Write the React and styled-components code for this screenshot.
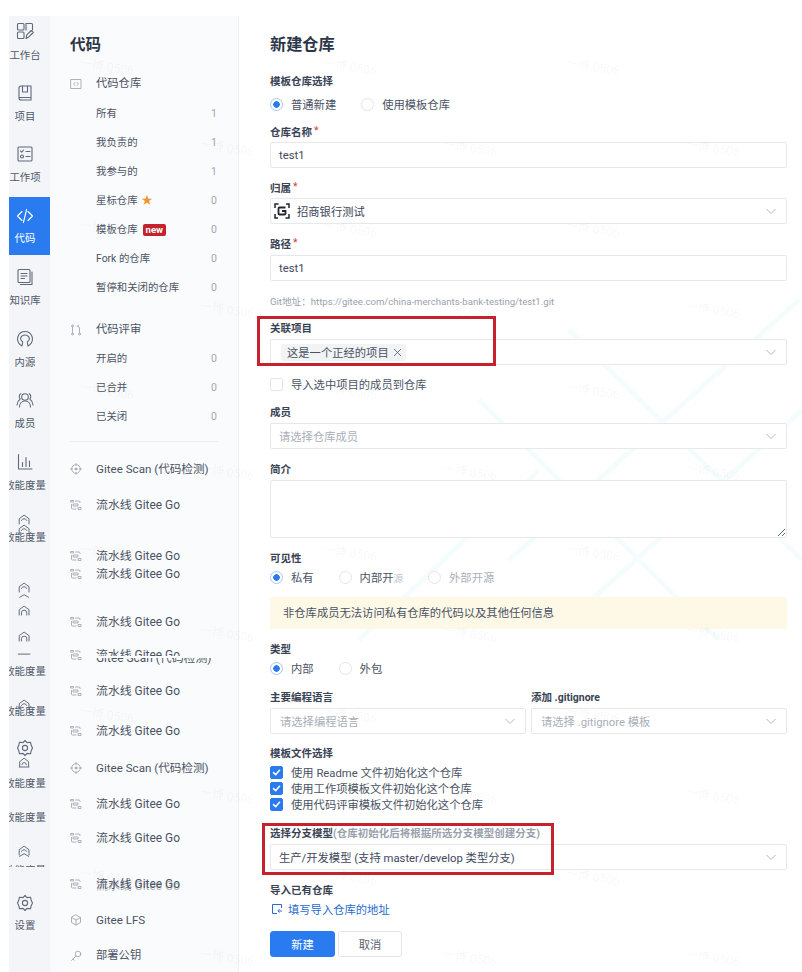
import React from 'react';
import styled, { createGlobalStyle } from 'styled-components';

const GlobalStyle = createGlobalStyle`
  html, body {
    margin: 0;
    background: #fff;
    font-family: Roboto, 'Noto Sans CJK SC', sans-serif;
  }
  * { box-sizing: border-box; }
`;

const Page = styled.div`
  position: relative;
  display: flex;
  width: 802px;
  height: 972px;
  overflow: hidden;
  background: #fff;
`;

// Icon rail
const Rail = styled.nav`
  flex: none;
  width: 41px;
  height: 956px;
  margin: 16px 0 0 9px;
  padding-right: 9px;
  background: #f4f5f8;
  display: flex;
  flex-direction: column;
  align-items: center;
  overflow: hidden;
  color: #5f697b;
`;

const RailIcon = styled.span`
  flex: none;
  display: block;
  height: ${p => p.$h}px;
  margin-top: ${p => p.$mt}px;
  position: relative;
  svg { display: block; }
`;

const RailLabel = styled.span`
  flex: none;
  position: relative;
  display: block;
  height: ${p => p.$h}px;
  margin-top: ${p => p.$mt}px;
  font-size: 10.4px;
  line-height: 16px;
  white-space: nowrap;
  overflow: hidden;
  color: #4f5869;
`;

const RailActive = styled.div`
  flex: none;
  align-self: stretch;
  width: 41px;
  height: 58px;
  margin-top: ${p => p.$mt}px;
  padding: 10px 9px 0 0;
  background: #2a7bef;
  color: #fff;
  display: flex;
  flex-direction: column;
  align-items: center;
  font-size: 10.4px;
  line-height: 14px;
  gap: 7px;
  svg { display: block; }
`;

const Svg = ({ size = 18, children }) => (
  <svg width={size} height={size} viewBox="0 0 18 18" fill="none" stroke="currentColor" strokeWidth="1.1" strokeLinecap="round" strokeLinejoin="round">
    {children}
  </svg>
);

const DashIcon = () => (
  <Svg>
    <rect x="1.5" y="1.5" width="6.5" height="6.5" rx="1" />
    <rect x="1.5" y="10" width="6.5" height="6.5" rx="1" />
    <path d="M10 1.5h5.5a1 1 0 0 1 1 1V8" />
    <path d="M10 8V2M10 16.5l.8-3.6 4.4-4.4 2 2-4.4 4.4z" />
  </Svg>
);
const BookIcon = () => (
  <Svg>
    <path d="M3 4a2 2 0 0 1 2-2h10v14H5a2 2 0 0 1-2-2zM3 13.5h12" />
    <path d="M6.5 2v6h5V2" />
  </Svg>
);
const TaskIcon = () => (
  <Svg>
    <rect x="2" y="2" width="14" height="14" rx="1" />
    <path d="M4.500 6l1.200 1.200 2-2.200M10 6.500h4M10 11.500h4" />
    <circle cx="6" cy="11.500" r="1.500" />
  </Svg>
);
const CodeIcon = () => (
  <Svg>
    <path d="M6 4.500 1.500 9 6 13.500M12 4.500 16.500 9 12 13.500M10.600 2.500 7.400 15.500" />
  </Svg>
);
const DocIcon = () => (
  <Svg>
    <rect x="2" y="1.500" width="12" height="13" rx="1" />
    <path d="M5 5.500h6M5 8h6M5 10.500h3.500M16 4v12.500H4.500" />
  </Svg>
);
const SourceIcon = () => (
  <Svg>
    <path d="M6 16C2.500 14 .8 10.500 2 6.500 3.300 3 6 1.500 9 1.500S14.700 3 16 6.500c1.200 4-.5 7.500-4 9.500l-.7-4c2-1.500 2.500-3 1.800-4.500C12.300 5.800 10.800 5 9 5s-3.300.8-4.100 2.500C4.200 9 4.700 10.500 6.700 12z" />
  </Svg>
);
const UsersIcon = () => (
  <Svg>
    <circle cx="9" cy="6" r="3.300" />
    <path d="M3.500 16c0-3.600 2.300-6 5.500-6s5.500 2.400 5.500 6M4.800 2.800C3 3.600 2.600 6.500 4.200 8M1 14c.2-2.400 1-4.200 2.600-5.200M13.200 2.800C15 3.600 15.400 6.500 13.800 8M17 14c-.2-2.400-1-4.200-2.600-5.200" />
  </Svg>
);
const BarsIcon = () => (
  <Svg>
    <path d="M2.500 1.500v14.500H16M6.500 9.500v4M10 4.500v9M13.500 8v5.500" />
  </Svg>
);
const ArchIcon = ({ open }) => (
  <Svg size={16}>
    <path d="M2.500 13.500V7.500L8 3.500l5.500 4v6" />
    <path d={open ? 'M5 9.500a3.300 3.300 0 0 1 6 0' : 'M5 13.500v-2.500a3 3 0 0 1 6 0v2.500'} />
  </Svg>
);
const RoofIcon = () => (
  <Svg size={16}>
    <path d="M3 6 8 3l5 3" />
  </Svg>
);
const RuleIcon = () => (
  <Svg size={16}>
    <path d="M1.500 8h13" />
  </Svg>
);
const GroundArchIcon = () => (
  <Svg size={16}>
    <path d="M2.500 13.500h11M3 13V7.500L8 3.500l5 4V13M5.500 11a2.500 2.500 0 0 1 5 0" />
  </Svg>
);
const GearIcon = () => (
  <Svg>
    <path d="M9 1.500 11 3.600l3.500-.4.7 3.100L16.500 9l-1.300 2.700-.7 3.100-3.500-.4L9 16.500l-2-2.100-3.500.4-.7-3.100L1.500 9l1.300-2.700.7-3.100 3.500.4z" />
    <circle cx="9" cy="9" r="2.600" />
  </Svg>
);

const railItems = [
  { icon: <DashIcon />, c: 31 },
  { label: '工作台', c: 55 },
  { icon: <BookIcon />, c: 93 },
  { label: '项目', c: 116 },
  { icon: <TaskIcon />, c: 154 },
  { label: '工作项', c: 177 },
  { active: true, c: 226 },
  { icon: <DocIcon />, c: 277 },
  { label: '知识库', c: 300 },
  { icon: <SourceIcon />, c: 339 },
  { label: '内源', c: 362 },
  { icon: <UsersIcon />, c: 400 },
  { label: '成员', c: 423 },
  { icon: <BarsIcon />, c: 462 },
  { label: '效能度量', c: 485 },
  { icon: <ArchIcon open />, c: 520, h: 16 },
  { icon: <ArchIcon open />, c: 530, h: 16 },
  { label: '效能度量', c: 537 },
  { icon: <ArchIcon open />, c: 588, h: 16 },
  { icon: <RoofIcon />, c: 600, h: 16 },
  { icon: <ArchIcon />, c: 611, h: 16 },
  { icon: <ArchIcon />, c: 637, h: 16 },
  { icon: <RuleIcon />, c: 655, h: 16 },
  { label: '效能度量', c: 671 },
  { icon: <ArchIcon open />, c: 705, h: 16 },
  { label: '效能度量', c: 711 },
  { icon: <GearIcon />, c: 748, h: 18 },
  { icon: <GroundArchIcon />, c: 763, h: 16 },
  { label: '效能度量', c: 783 },
  { label: '效能度量', c: 817 },
  { icon: <ArchIcon open />, c: 851, h: 16 },
  { icon: <RoofIcon />, c: 859, h: 16 },
  { label: '效能度量', c: 865, h: 4 },
  { icon: <GearIcon />, c: 903 },
  { label: '设置', c: 925 },
];

function RailBar() {
  let y = 16;
  return (
    <Rail>
      {railItems.map((it, i) => {
        const h = it.active ? 58 : it.h || (it.label ? 14 : 18);
        const mt = it.c - h / 2 - y;
        y = it.c + h / 2;
        if (it.active) {
          return (
            <RailActive key={i} $mt={mt}>
              <CodeIcon />
              代码
            </RailActive>
          );
        }
        if (it.label) return <RailLabel key={i} $mt={mt} $h={h}>{it.label}</RailLabel>;
        return <RailIcon key={i} $mt={mt} $h={h}>{it.icon}</RailIcon>;
      })}
    </Rail>
  );
}

// Secondary menu
const Side = styled.aside`
  position: relative;
  flex: none;
  width: 189px;
  height: 956px;
  margin-top: 16px;
  padding: 0 20px;
  background: #fafbfc;
  border-right: 1px solid #eef0f4;
  overflow: hidden;
`;

const SideTitle = styled.h2`
  margin: 19px 0 0;
  height: 20px;
  font-size: 15.5px;
  line-height: 20px;
  font-weight: 700;
  color: #2c3648;
`;

const Row = styled.div`
  position: relative;
  display: flex;
  align-items: center;
  height: 20px;
  margin-top: ${p => p.$mt}px;
  padding-left: 26px;
  font-size: ${p => p.$size}px;
  line-height: 20px;
  color: #4a5364;
  white-space: nowrap;
`;

const RowIcon = styled.span`
  position: absolute;
  left: 0;
  top: 4px;
  width: 12px;
  height: 12px;
  color: #a3a9b4;
  svg { display: block; }
`;

const Count = styled.span`
  margin-left: auto;
  padding-right: 1px;
  font-size: 10.5px;
  color: #a3a9b4;
`;

const Star = styled.span`
  margin-left: 4px;
  font-size: 11px;
  color: #f0932b;
`;

const NewBadge = styled.span`
  margin-left: 5px;
  height: 12px;
  padding: 0 3px;
  border-radius: 2px;
  background: #c4222d;
  color: #fff;
  font-size: 9.5px;
  line-height: 11px;
  font-weight: 700;
`;

const Divider = styled.div`
  height: 1px;
  margin-top: ${p => p.$mt}px;
  background: #eceef1;
`;

const Smear = styled.span`
  display: inline-block;
  clip-path: inset(0 0 9px 0);
`;

const SmearOver = styled.span`
  position: absolute;
  left: 26px;
  top: 3px;
  color: #4a5364;
  clip-path: inset(10px 0 0 0);
`;

const Doubled = styled.span`
  text-shadow: 0 2px 0 rgba(74, 83, 100, 0.45);
`;

const Tiny = ({ children }) => (
  <svg width="12" height="12" viewBox="0 0 12 12" fill="none" stroke="currentColor" strokeWidth="0.9" strokeLinecap="round" strokeLinejoin="round">
    {children}
  </svg>
);
const CodeBox = () => (
  <Tiny>
    <rect x="1" y="1.500" width="10" height="9" />
    <path d="M5 4.500 3.500 6 5 7.500M7 4.500 8.500 6 7 7.500" />
  </Tiny>
);
const PrIcon = () => (
  <Tiny>
    <circle cx="2.500" cy="2" r="1" />
    <circle cx="2.500" cy="10" r="1" />
    <circle cx="9.500" cy="10" r="1" />
    <path d="M2.500 3v6M9.500 9V3.500L7.500 2M7.500 2l1-1M7.500 2l1 1" />
  </Tiny>
);
const ScanIcon = () => (
  <Tiny>
    <circle cx="6" cy="6" r="4.300" />
    <circle cx="6" cy="6" r="1" fill="currentColor" />
    <path d="M6 .5v2M6 9.500v2M.5 6h2M9.500 6h2" />
  </Tiny>
);
const PipeIcon = () => (
  <Tiny>
    <path d="M1 1.500h2.500v1.500H1zM5.500 2H9a1 1 0 0 1 1 1v.5M1.500 5.500V9a1 1 0 0 0 1 1H6M8.500 8.500H11V10.500H8.500z" />
    <rect x="3.500" y="5" width="4.500" height="2" />
  </Tiny>
);
const CubeIcon = () => (
  <Tiny>
    <path d="M6 1 10.500 3.500v5L6 11 1.500 8.500v-5zM1.500 3.500 6 6l4.500-2.500M6 6v5" />
  </Tiny>
);
const KeyIcon = () => (
  <Tiny>
    <circle cx="8" cy="4" r="2.800" />
    <path d="M6 6 1.500 10.500M3 9l1.200 1.200" />
  </Tiny>
);

const rows = [
  { t: '代码仓库', c: 83, icon: <CodeBox />, size: 11.3 },
  { t: '所有', c: 113, n: 1 },
  { t: '我负责的', c: 142, n: 1 },
  { t: '我参与的', c: 171, n: 1 },
  { t: '星标仓库', c: 200, n: 0, star: true },
  { t: '模板仓库', c: 229, n: 0, badge: true },
  { t: 'Fork 的仓库', c: 258, n: 0 },
  { t: '暂停和关闭的仓库', c: 287, n: 0 },
  { t: '代码评审', c: 329, icon: <PrIcon />, size: 11.3 },
  { t: '开启的', c: 358, n: 0 },
  { t: '已合并', c: 387, n: 0 },
  { t: '已关闭', c: 416, n: 0 },
  { divider: true, c: 440 },
  { t: 'Gitee Scan (代码检测)', c: 468, icon: <ScanIcon />, size: 11.6 },
  { t: '流水线 Gitee Go', c: 504, icon: <PipeIcon />, size: 11.9 },
  { t: '流水线 Gitee Go', c: 555, icon: <PipeIcon />, size: 11.9 },
  { t: '流水线 Gitee Go', c: 573, icon: <PipeIcon />, size: 11.9 },
  { t: '流水线 Gitee Go', c: 621, icon: <PipeIcon />, size: 11.9 },
  { t: '流水线 Gitee Go', c: 654, icon: <PipeIcon />, size: 11.9, over: 'Gitee Scan (代码检测)' },
  { t: '流水线 Gitee Go', c: 690, icon: <PipeIcon />, size: 11.9 },
  { t: '流水线 Gitee Go', c: 730, icon: <PipeIcon />, size: 11.9 },
  { t: 'Gitee Scan (代码检测)', c: 767, icon: <ScanIcon />, size: 11.6 },
  { t: '流水线 Gitee Go', c: 803, icon: <PipeIcon />, size: 11.9 },
  { t: '流水线 Gitee Go', c: 837, icon: <PipeIcon />, size: 11.9 },
  { t: '流水线 Gitee Go', c: 883, icon: <PipeIcon />, size: 11.9, doubled: true },
  { t: 'Gitee LFS', c: 919, icon: <CubeIcon />, size: 11.6 },
  { t: '部署公钥', c: 955, icon: <KeyIcon />, size: 11.3 },
];

function SideMenu() {
  // title ends at y=55; rows sit 1px lower than their nominal centre
  let y = 54;
  return (
    <Side>
      <SideTitle>代码</SideTitle>
      {rows.map((r, i) => {
        if (r.divider) {
          const mt = r.c - y;
          y = r.c + 1;
          return <Divider key={i} $mt={mt} />;
        }
        const mt = r.c - 10 - y;
        y = r.c + 10;
        return (
          <Row key={i} $mt={mt} $size={r.size || 10.4}>
            {r.icon && <RowIcon>{r.icon}</RowIcon>}
            {r.over ? (
              <>
                <Smear>{r.t}</Smear>
                <SmearOver>{r.over}</SmearOver>
              </>
            ) : r.doubled ? (
              <Doubled>{r.t}</Doubled>
            ) : (
              r.t
            )}
            {r.star && <Star>★</Star>}
            {r.badge && <NewBadge>new</NewBadge>}
            {r.n !== undefined && <Count>{r.n}</Count>}
          </Row>
        );
      })}
    </Side>
  );
}

// Main form
const Main = styled.main`
  position: relative;
  flex: 1;
  min-width: 0;
  padding: 35px 15px 0 31px;
  font-size: 11.3px;
  color: #40485b;
`;

const Backdrop = styled.svg`
  position: absolute;
  left: 0;
  top: 0;
  width: 563px;
  height: 972px;
`;

const Form = styled.form`
  position: relative;
  margin: 0;
`;

const Title = styled.h1`
  margin: 0;
  height: 20px;
  font-size: 16.2px;
  line-height: 20px;
  font-weight: 700;
  color: #2c3648;
`;

const Label = styled.div`
  height: 14px;
  margin-top: ${p => p.$mt}px;
  font-size: 10.5px;
  line-height: ${p => p.$lh ?? 16}px;
  font-weight: 700;
  color: #3a4354;
  white-space: nowrap;
`;

const Req = styled.span`
  margin-left: 2px;
  color: #d2402f;
  font-weight: 400;
  vertical-align: 2px;
`;

const Hint = styled.span`
  font-size: ${p => p.$size}px;
  font-weight: ${p => p.$weight};
  color: #9aa1ad;
`;

const OptionRow = styled.div`
  display: flex;
  align-items: center;
  height: 16px;
  margin-top: ${p => p.$mt}px;
  gap: 25px;
`;

const Option = styled.span`
  display: inline-flex;
  align-items: center;
  gap: 8px;
  color: ${p => (p.$muted ? '#a9afb9' : '#4a5364')};
`;

const RadioDot = styled.span`
  width: 13px;
  height: 13px;
  border-radius: 50%;
  border: 1px solid ${p => (p.$on ? '#a9c8f7' : '#e3e5ea')};
  background: ${p => (p.$on ? 'radial-gradient(circle, #2a7bef 0 3px, #fff 3.5px)' : '#fff')};
`;

const CheckBox = styled.span`
  display: inline-flex;
  align-items: center;
  justify-content: center;
  width: 13px;
  height: 13px;
  border-radius: 2px;
  border: 1px solid ${p => (p.$on ? '#2a7bef' : '#e3e5ea')};
  background: ${p => (p.$on ? '#2a7bef' : '#fff')};
`;

const Field = styled.div`
  display: flex;
  align-items: center;
  height: 26px;
  margin-top: 4px;
  padding: 0 9px 0 ${p => p.$pl ?? 8}px;
  border: 1px solid #e6e8ec;
  border-radius: 2px;
  background: #fff;
  color: #40485b;
  svg.chev { margin-left: auto; flex: none; color: #b3b8c1; }
`;

const Placeholder = styled.span`
  color: #a9afb9;
`;

const Faded = styled.span`
  color: #c0c5cd;
  font-size: 9.5px;
`;

const OwnerText = styled.span`
  margin-left: 7px;
`;

const Tag = styled.span`
  display: inline-flex;
  align-items: center;
  gap: 4px;
  height: 17px;
  padding: 0 4px 0 6px;
  border-radius: 2px;
  background: #f2f3f5;
  color: #4a5364;
`;

const Area = styled.textarea`
  display: block;
  width: 100%;
  height: 58px;
  margin: 4px 0 0;
  border: 1px solid #e6e8ec;
  border-radius: 2px;
  background: #fff;
  resize: vertical;
  outline: none;
`;

const Alert = styled.div`
  height: 32px;
  margin-top: 12px;
  padding-left: 13px;
  background: #fef8e7;
  color: #4a5364;
  line-height: 33px;
`;

const Columns = styled.div`
  display: grid;
  grid-template-columns: 256px 256px;
  column-gap: 5px;
  margin-top: ${p => p.$mt}px;
`;

const CheckList = styled.div`
  display: flex;
  flex-direction: column;
  margin-top: 4px;
`;

const CheckRow = styled.div`
  display: flex;
  align-items: center;
  height: 16px;
  gap: 8px;
  color: #4a5364;
`;

const ImportLink = styled.a`
  display: flex;
  align-items: center;
  gap: 5px;
  height: 16px;
  margin-top: 4px;
  padding-left: 1px;
  color: #2a6bd0;
  svg { flex: none; }
`;

const Actions = styled.div`
  display: flex;
  gap: 3px;
  margin-top: 14px;
`;

const Button = styled.button`
  width: ${p => (p.$primary ? 65 : 64)}px;
  height: 26px;
  padding: 0;
  border: 1px solid ${p => (p.$primary ? '#2a7bef' : '#e3e5ea')};
  border-radius: 3px;
  background: ${p => (p.$primary ? '#2a7bef' : '#fff')};
  color: ${p => (p.$primary ? '#fff' : '#5a6374')};
  font: inherit;
`;

const Callout = styled.div`
  position: absolute;
  border: 3px solid #c6222e;
  pointer-events: none;
  left: ${p => p.$x}px;
  top: ${p => p.$y}px;
  width: ${p => p.$w}px;
  height: ${p => p.$h}px;
`;

const Chevron = () => (
  <svg className="chev" width="12" height="12" viewBox="0 0 12 12" fill="none" stroke="currentColor" strokeWidth="1">
    <path d="M1.500 4 6 8.500 10.500 4" />
  </svg>
);

const Tick = () => (
  <svg width="9" height="9" viewBox="0 0 9 9" fill="none" stroke="#fff" strokeWidth="1.600" strokeLinecap="round" strokeLinejoin="round">
    <path d="M1.500 4.700 3.600 6.700 7.500 2.300" />
  </svg>
);

const OrgLogo = () => (
  <svg width="16" height="16" viewBox="0 0 16 16" fill="none" stroke="#23272f" strokeWidth="1.500">
    <path d="M4.500 1H1v4M11.500 15H15v-4M1 11v4h3M15 5V1h-3" />
    <path d="M11.500 4.500H5.500A1 1 0 0 0 4.500 5.500v5a1 1 0 0 0 1 1h5a1 1 0 0 0 1-1V8H8" strokeWidth="1.800" />
  </svg>
);

const ImportIcon = () => (
  <svg width="12" height="12" viewBox="0 0 12 12" fill="none" stroke="currentColor" strokeWidth="1">
    <path d="M10.500 5V1.500h-9v9H6" />
    <path d="M11 8H7M8.500 6.300 6.800 8l1.700 1.700" />
  </svg>
);

const Close = () => (
  <svg width="9" height="9" viewBox="0 0 9 9" fill="none" stroke="#5a6374" strokeWidth="0.900">
    <path d="M1 1l7 7M8 1 1 8" />
  </svg>
);

const Watermark = styled.span`
  position: absolute;
  font-size: 12px;
  line-height: 14px;
  color: rgba(70, 80, 100, 0.055);
  transform: rotate(9deg);
  white-space: nowrap;
  pointer-events: none;
`;

const marks = [];
for (let r = 0; r < 12; r++) {
  const y = 60 + r * 81;
  const x0 = r % 2 ? 200 : 80;
  for (let k = 0; k < 3; k++) marks.push({ x: x0 + k * 243, y });
}

export default function App() {
  return (
    <Page>
      <GlobalStyle />
      <RailBar />
      <SideMenu />
      <Main>
        <Backdrop viewBox="0 0 563 972" fill="none" stroke="#f5fcfd" strokeWidth="5">
          <path d="M270 560 560 300M330 620 563 410M240 400 480 640M330 330 563 560M120 640 300 470" />
        </Backdrop>
        <Form>
          <Title>新建仓库</Title>

          <Label $mt={19}>模板仓库选择</Label>
          <OptionRow $mt={8}>
            <Option><RadioDot $on />普通新建</Option>
            <Option><RadioDot />使用模板仓库</Option>
          </OptionRow>

          <Label $mt={12} $lh={14}>仓库名称<Req>*</Req></Label>
          <Field>test1</Field>

          <Label $mt={12} $lh={14}>归属<Req>*</Req></Label>
          <Field $pl={3}>
            <OrgLogo />
            <OwnerText>招商银行测试</OwnerText>
            <Chevron />
          </Field>

          <Label $mt={13} $lh={12}>路径<Req>*</Req></Label>
          <Field>test1</Field>

          <Label $mt={13}>
            <Hint $size={9.6} $weight={400}>Git地址：https://gitee.com/china-merchants-bank-testing/test1.git</Hint>
          </Label>

          <Label $mt={13}>关联项目</Label>
          <Field $pl={10}>
            <Tag>这是一个正经的项目<Close /></Tag>
            <Chevron />
          </Field>

          <OptionRow $mt={11}>
            <Option><CheckBox />导入选中项目的成员到仓库</Option>
          </OptionRow>

          <Label $mt={13}>成员</Label>
          <Field><Placeholder>请选择仓库成员</Placeholder><Chevron /></Field>

          <Label $mt={13}>简介</Label>
          <Area readOnly />

          <Label $mt={13}>可见性</Label>
          <OptionRow $mt={4}>
            <Option><RadioDot $on />私有</Option>
            <Option><RadioDot /><span>内部开<Faded>源</Faded></span></Option>
            <Option $muted><RadioDot />外部开源</Option>
          </OptionRow>

          <Alert>非仓库成员无法访问私有仓库的代码以及其他任何信息</Alert>

          <Label $mt={13}>类型</Label>
          <OptionRow $mt={4}>
            <Option><RadioDot $on />内部</Option>
            <Option><RadioDot />外包</Option>
          </OptionRow>

          <Columns $mt={14}>
            <div>
              <Label $mt={0}>主要编程语言</Label>
              <Field $pl={9}><Placeholder>请选择编程语言</Placeholder><Chevron /></Field>
            </div>
            <div>
              <Label $mt={0}>添加 .gitignore</Label>
              <Field $pl={9}><Placeholder>请选择 .gitignore 模板</Placeholder><Chevron /></Field>
            </div>
          </Columns>

          <Label $mt={12}>模板文件选择</Label>
          <CheckList>
            <CheckRow><CheckBox $on><Tick /></CheckBox>使用 Readme 文件初始化这个仓库</CheckRow>
            <CheckRow><CheckBox $on><Tick /></CheckBox>使用工作项模板文件初始化这个仓库</CheckRow>
            <CheckRow><CheckBox $on><Tick /></CheckBox>使用代码评审模板文件初始化这个仓库</CheckRow>
          </CheckList>

          <Label $mt={14}>选择分支模型<Hint $size={10.5} $weight={700}>(仓库初始化后将根据所选分支模型创建分支)</Hint></Label>
          <Field>生产/开发模型 (支持 master/develop 类型分支)<Chevron /></Field>

          <Label $mt={13}>导入已有仓库</Label>
          <ImportLink><ImportIcon />填写导入仓库的地址</ImportLink>

          <Actions>
            <Button $primary type="button">新建</Button>
            <Button type="button">取消</Button>
          </Actions>
        </Form>
      </Main>
      <Callout $x={257} $y={316} $w={239} $h={50} />
      <Callout $x={262} $y={823} $w={292} $h={52} />
      {marks.map((m, i) => (
        <Watermark key={i} style={{ left: m.x, top: m.y }}>一博 0506</Watermark>
      ))}
    </Page>
  );
}
